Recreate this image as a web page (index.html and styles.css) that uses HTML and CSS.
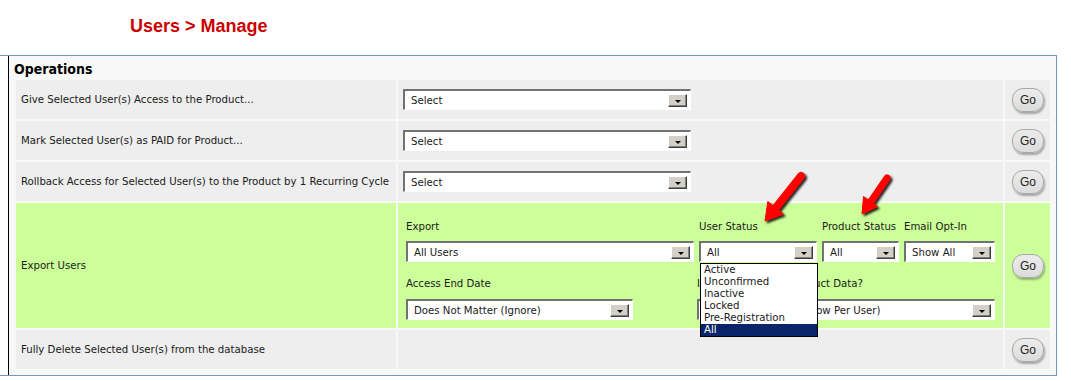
FILE: index.html
```html
<!DOCTYPE html>
<html lang="en">
<head>
<meta charset="utf-8">
<title>Users &gt; Manage</title>
<link rel="stylesheet" href="styles.css">
</head>
<body>
<h1 class="page-title">Users &gt; Manage</h1>
<div class="frame">
  <div class="panel">
    <h2 class="panel-title">Operations</h2>
    <table class="ops">
      <colgroup><col class="c-label"><col class="c-field"><col class="c-go"></colgroup>
      <tr class="std">
        <td class="label">Give Selected User(s) Access to the Product...</td>
        <td class="field"><div class="select sel-wide"><span class="val">Select</span><span class="drop"></span></div></td>
        <td class="go"><button class="go-btn">Go</button></td>
      </tr>
      <tr class="std">
        <td class="label">Mark Selected User(s) as PAID for Product...</td>
        <td class="field"><div class="select sel-wide"><span class="val">Select</span><span class="drop"></span></div></td>
        <td class="go"><button class="go-btn">Go</button></td>
      </tr>
      <tr class="std">
        <td class="label">Rollback Access for Selected User(s) to the Product by 1 Recurring Cycle</td>
        <td class="field"><div class="select sel-wide"><span class="val">Select</span><span class="drop"></span></div></td>
        <td class="go"><button class="go-btn">Go</button></td>
      </tr>
      <tr class="export">
        <td class="label">Export Users</td>
        <td class="field">
          <div class="export-grid">
            <div class="lbl top">Export</div>
            <div class="lbl top">User Status</div>
            <div class="lbl top">Product Status</div>
            <div class="lbl top">Email Opt-In</div>

            <div class="select"><span class="val">All Users</span><span class="drop"></span></div>
            <div class="status-wrap">
              <div class="select"><span class="val">All</span><span class="drop"></span></div>
              <ul class="listbox">
                <li>Active</li>
                <li>Unconfirmed</li>
                <li>Inactive</li>
                <li>Locked</li>
                <li>Pre-Registration</li>
                <li class="sel">All</li>
              </ul>
            </div>
            <div class="select"><span class="val">All</span><span class="drop"></span></div>
            <div class="select"><span class="val">Show All</span><span class="drop"></span></div>

            <div class="lbl bottom">Access End Date</div>
            <div class="lbl bottom span-rest">Include Additional Product Data?</div>

            <div class="select sel-date"><span class="val">Does Not Matter (Ignore)</span><span class="drop"></span></div>
            <div class="select span-rest"><span class="val">Merge Product (One Row Per User)</span><span class="drop"></span></div>
          </div>
        </td>
        <td class="go"><button class="go-btn">Go</button></td>
      </tr>
      <tr class="std">
        <td class="label">Fully Delete Selected User(s) from the database</td>
        <td class="field"></td>
        <td class="go"><button class="go-btn">Go</button></td>
      </tr>
    </table>
  </div>
</div>

<svg class="arrows" width="160" height="70" viewBox="0 0 160 70" aria-hidden="true">
  <defs>
    <filter id="sh" x="-20%" y="-20%" width="150%" height="150%">
      <feDropShadow dx="2" dy="2" stdDeviation="1.2" flood-color="#000" flood-opacity="0.85"/>
    </filter>
  </defs>
  <g filter="url(#sh)" fill="#f00" stroke="#f00">
    <line x1="56" y1="11" x2="29" y2="45" stroke-width="8" stroke-linecap="round"/>
    <polygon points="20,56 22.8,36.5 38.4,49" stroke-width="1" stroke-linejoin="round"/>
    <line x1="142" y1="13" x2="124.5" y2="38.5" stroke-width="7" stroke-linecap="round"/>
    <polygon points="117,49 118.5,31.5 132.5,41.5" stroke-width="1" stroke-linejoin="round"/>
  </g>
</svg>
</body>
</html>
```

FILE: styles.css
```css
body {
  margin: 0;
  background: #fff;
  font-family: "DejaVu Sans Condensed", "DejaVu Sans", sans-serif;
  font-stretch: condensed;
  font-size: 11.3px;
  color: #1a1a1a;
  position: relative;
}

.page-title {
  margin: 0 0 19px;
  padding: 16px 0 0 130px;
  font: bold 18px/20px "Liberation Sans", Arial, sans-serif;
  color: #cc0000;
}

.frame {
  width: 1056px;
  border: 1px solid #7496c8;
  border-left: 0;
  background: #fff;
}

.panel {
  margin-left: 8px;
  border-left: 1px solid #000;
  background: #f8f8f8;
  padding: 4px 4px 4px 5px;
}

.panel-title {
  margin: 0;
  font-size: 14px;
  line-height: 18px;
  font-weight: bold;
  color: #000;
}

.ops {
  border-collapse: separate;
  border-spacing: 2px;
  table-layout: fixed;
  width: 1038px;
}
.c-label { width: 380px; }
.c-field { width: 605px; }
.c-go { width: 45px; }

.ops td {
  padding: 0;
  vertical-align: middle;
  background: #eeeeee;
}
.ops tr.std { height: 39px; }
.ops td.label { padding-left: 5px; line-height: 13px; }
.ops td.field { padding-left: 5px; }
.ops td.go { text-align: center; }

.ops tr.export td { background: #ccff99; }
.ops tr.export td.field { padding: 17px 0 8px 8px; }

.export-grid {
  display: grid;
  grid-template-columns: 288px 118px 77px 91px;
  column-gap: 5px;
}
.lbl { line-height: 13px; white-space: nowrap; }
.lbl.top { margin-bottom: 8px; }
.lbl.bottom { margin-top: 15px; margin-bottom: 9px; }
.span-rest { grid-column: 2 / 5; margin-left: -2px; }

.select {
  box-sizing: border-box;
  display: flex;
  align-items: center;
  justify-content: space-between;
  height: 21px;
  background: #fff;
  border-top: 2px solid #727272;
  border-left: 2px solid #727272;
  border-right: 1px solid #fff;
  border-bottom: 1px solid #fff;
  padding: 0 3px 0 6px;
  white-space: nowrap;
  overflow: hidden;
}
.sel-wide { width: 288px; }
.sel-date { width: 227px; }
.val { line-height: 13px; }

.drop {
  flex: none;
  box-sizing: border-box;
  position: relative;
  width: 19px;
  height: 13px;
  background: #d4d0c8;
  border: 1px solid;
  border-color: #fff #404040 #404040 #fff;
  box-shadow: inset -1px -1px 0 #808080;
}
.drop::after {
  content: "";
  position: absolute;
  left: 6px;
  top: 5px;
  border-left: 3px solid transparent;
  border-right: 3px solid transparent;
  border-top: 3px solid #000;
}

.status-wrap { position: relative; }
.listbox {
  position: absolute;
  left: 1px;
  top: 22px;
  z-index: 2;
  box-sizing: border-box;
  width: 118px;
  margin: 0;
  padding: 0;
  list-style: none;
  background: #fff;
  border: 1px solid #000;
}
.listbox li {
  height: 12px;
  line-height: 12px;
  padding-left: 3px;
  white-space: nowrap;
}
.listbox li.sel {
  background: #0a246a;
  color: #fff;
}

.go-btn {
  box-sizing: border-box;
  width: 32px;
  height: 24px;
  margin-left: 1px;
  padding: 0;
  border: 1px solid #a8a8a8;
  border-radius: 11px;
  background: linear-gradient(#ececec, #dcdcdc);
  box-shadow: 1px 2px 2px rgba(0, 0, 0, 0.3);
  font: 12px "Liberation Sans", Arial, sans-serif;
  color: #222;
}

.arrows {
  position: absolute;
  left: 745px;
  top: 165px;
  z-index: 3;
  pointer-events: none;
}
```
